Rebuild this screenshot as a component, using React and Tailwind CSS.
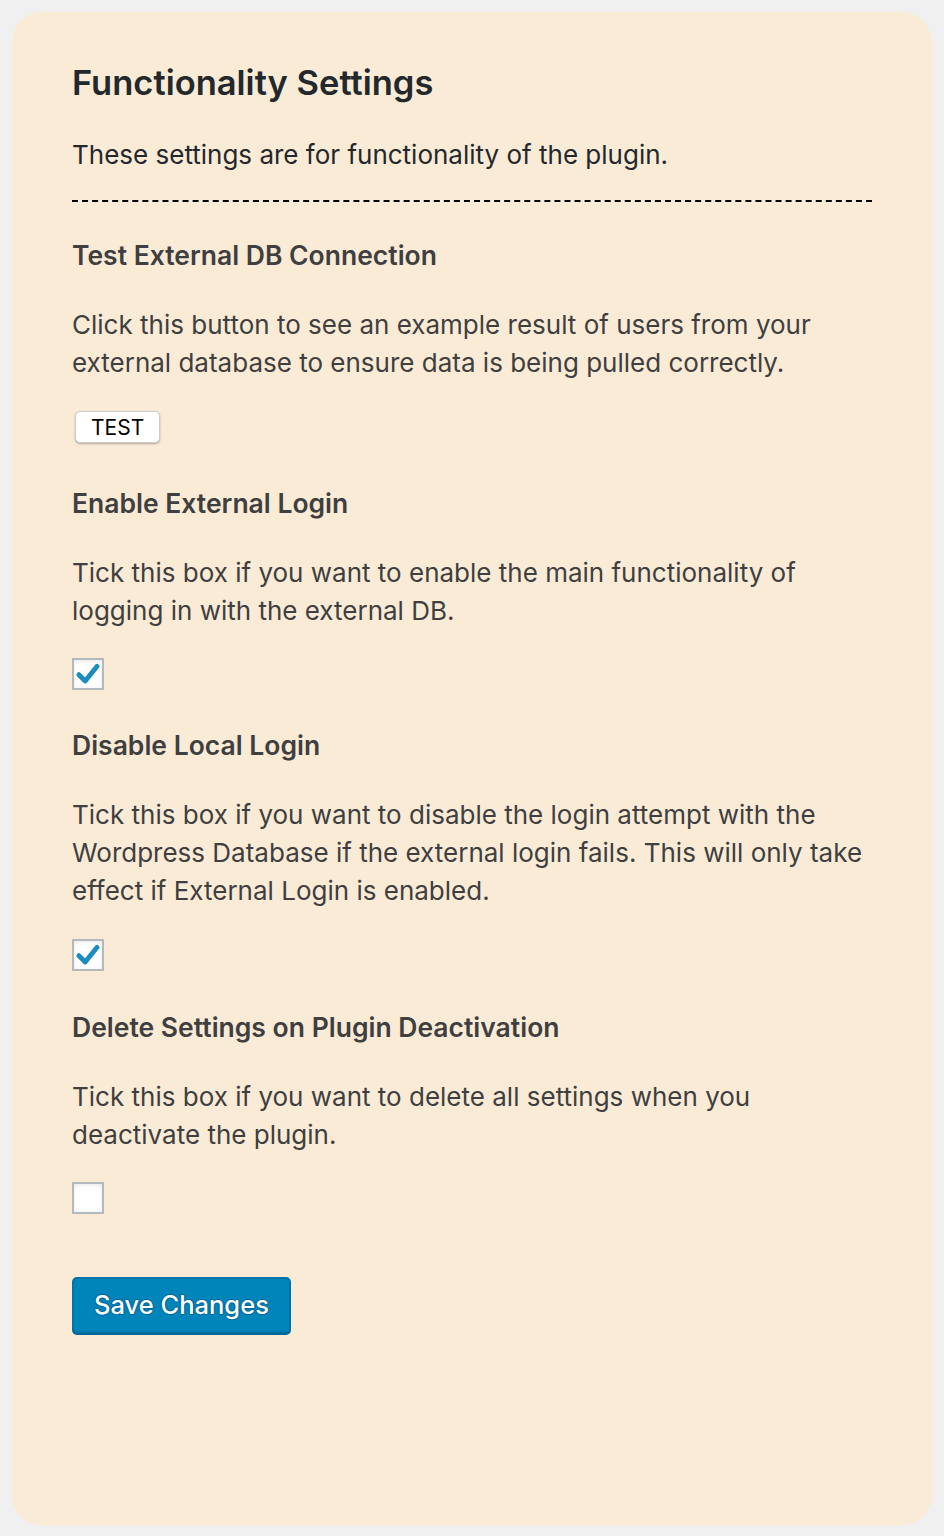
import React from "react";

const Check = ({ checked }) => (
  <div className="w-8 h-8 border-2 border-[#b4b9be] bg-white shadow-[inset_0_1px_4px_rgba(0,0,0,0.1)] flex items-center justify-center">
    {checked && (
      <svg viewBox="0 0 20 20" className="w-7 h-7">
        <path d="M3.5 10.5 L8 15 L16.5 4.5" fill="none" stroke="#1e8cbe" strokeWidth="3.5" strokeLinecap="round" strokeLinejoin="round" />
      </svg>
    )}
  </div>
);

const Section = ({ title, children }) => (
  <div>
    <h3 className="text-[26.5px] font-semibold text-[#3f3f3f] leading-[38px]">{title}</h3>
    <p className="mt-8 text-[26px] text-[#3f3f3f] leading-[38px]">{children}</p>
  </div>
);

export default function App() {
  return (
    <div className="min-h-[1536px] bg-[#f0f0f0] p-3 font-['Inter',sans-serif]">
      <div className="bg-[#faebd7] rounded-[30px] min-h-[1513px] px-[60px] pt-[49px]">
        <h2 className="text-[34.5px] font-semibold text-[#23282d] leading-[44px]">Functionality Settings</h2>
        <p className="mt-[31px] text-[26px] text-[#23282d] leading-[38px]">These settings are for functionality of the plugin.</p>
        <div className="mt-[26px] border-t-2 border-dashed border-black"></div>

        <div className="mt-[34px]">
          <Section title="Test External DB Connection">
            Click this button to see an example result of users from your external database to ensure data is being pulled correctly.
          </Section>
          <button className="mt-[29px] ml-[3px] h-8 px-[15px] bg-white rounded-[5px] border border-[#ccc] shadow-[0_1px_2px_rgba(0,0,0,0.3)] text-[21px] text-black leading-none">
            TEST
          </button>
        </div>

        <div className="mt-[41px]">
          <Section title="Enable External Login">
            Tick this box if you want to enable the main functionality of logging in with the external DB.
          </Section>
          <div className="mt-[28px]"><Check checked /></div>
        </div>

        <div className="mt-[36px]">
          <Section title="Disable Local Login">
            Tick this box if you want to disable the login attempt with the Wordpress Database if the external login fails. This will only take effect if External Login is enabled.
          </Section>
          <div className="mt-[29px]"><Check checked /></div>
        </div>

        <div className="mt-[37px]">
          <Section title="Delete Settings on Plugin Deactivation">
            Tick this box if you want to delete all settings when you deactivate the plugin.
          </Section>
          <div className="mt-[28px]"><Check /></div>
        </div>

        <button className="mt-[63px] h-[56px] px-[20px] bg-[#0085ba] border-2 border-[#0073aa] rounded-[5px] shadow-[0_2px_0_#006799] text-white text-[25.5px] font-medium [text-shadow:0_-1px_1px_#006799,1px_0_1px_#006799,0_1px_1px_#006799,-1px_0_1px_#006799]">
          Save Changes
        </button>
      </div>
    </div>
  );
}
